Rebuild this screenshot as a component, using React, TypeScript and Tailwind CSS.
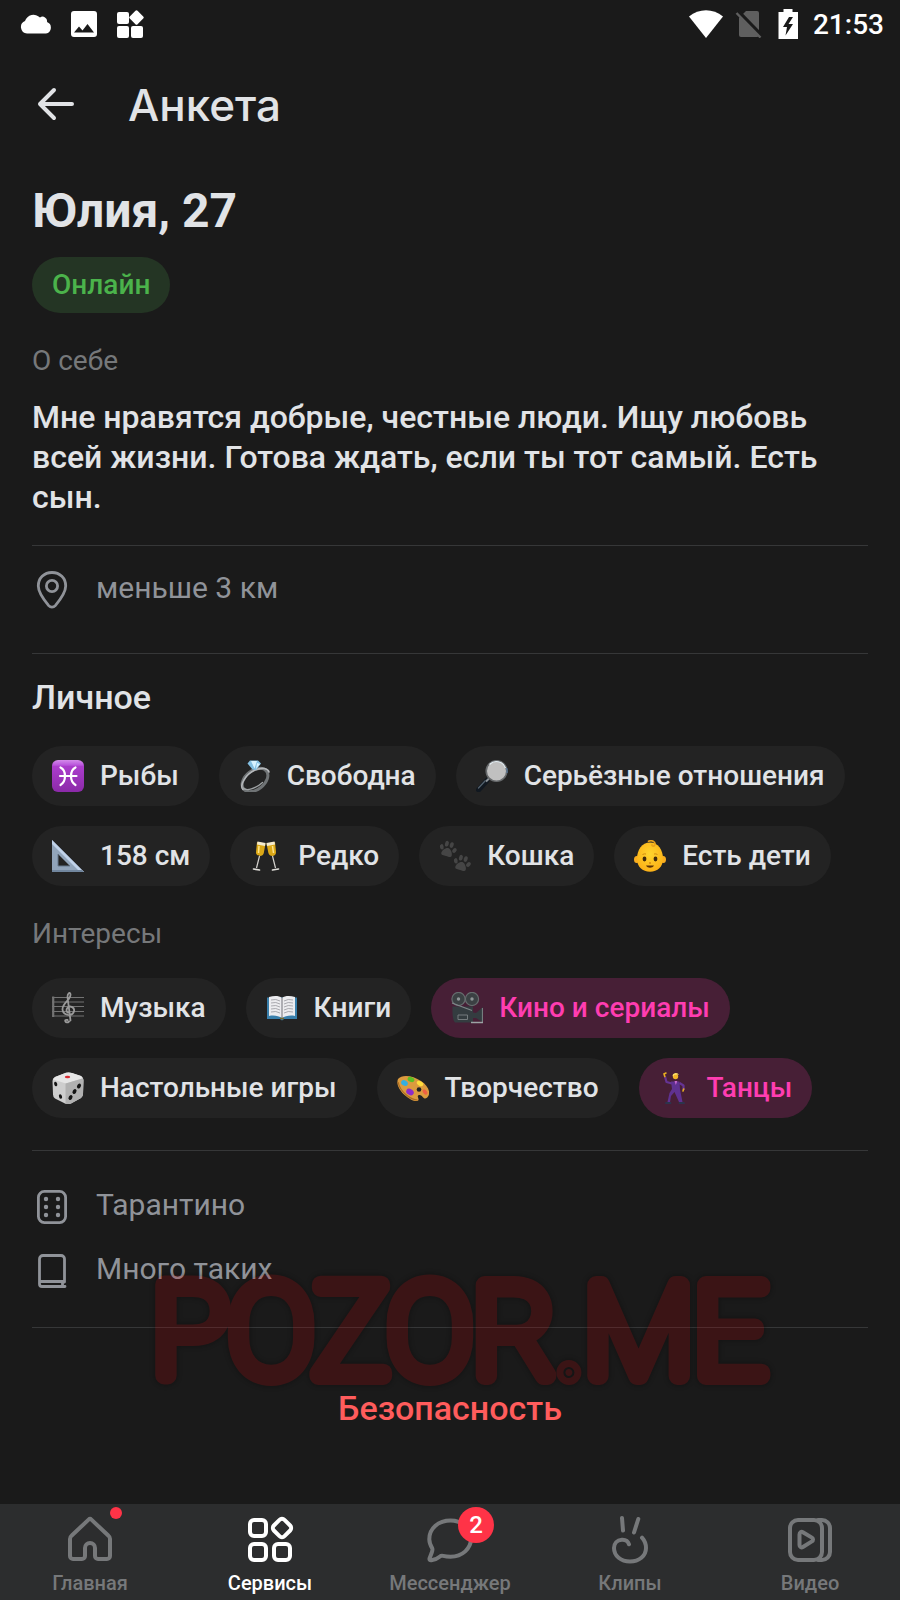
import React from 'react';

type Tag = { label: string; icon: React.ReactNode; accent?: boolean };
type Tab = { label: string; icon: React.ReactNode; active?: boolean; dot?: boolean; count?: number };

const Emoji = ({ children }: { children: React.ReactNode }) => (
  <svg viewBox="0 0 32 32" className="h-8 w-8 shrink-0" fill="none" aria-hidden="true">{children}</svg>
);

const Paw = ({ x, y, turn }: { x: number; y: number; turn: number }) => (
  <g transform={`translate(${x} ${y}) rotate(${turn})`} fill="#454545">
    <path d="M0 -1C2.6 -1 5.6 3 5.4 5.4C5.2 8 2.4 7.2 0 7.2S-5.2 8 -5.4 5.4C-5.6 3 -2.6 -1 0 -1Z" />
    <ellipse cx="-6.6" cy="-0.4" rx="1.9" ry="2.7" transform="rotate(-25 -6.6 -.4)" />
    <ellipse cx="-2.5" cy="-4.8" rx="1.9" ry="2.9" />
    <ellipse cx="2.5" cy="-4.8" rx="1.9" ry="2.9" />
    <ellipse cx="6.6" cy="-0.4" rx="1.9" ry="2.7" transform="rotate(25 6.6 -.4)" />
  </g>
);

const personal: Tag[] = [
  {
    label: 'Рыбы',
    icon: (
      <Emoji>
        <defs>
          <linearGradient id="pisces" x1="0" y1="0" x2="0" y2="1">
            <stop offset="0" stopColor="#d48bea" />
            <stop offset="0.16" stopColor="#b955dc" />
            <stop offset="0.2" stopColor="#ab3dcc" />
            <stop offset="1" stopColor="#8b2aa8" />
          </linearGradient>
        </defs>
        <rect width="32" height="32" rx="6" fill="url(#pisces)" />
        <path d="M8.500 7.500C14.500 10.500 14.500 21.500 8.500 25M23.500 7.500C17.500 10.500 17.500 21.500 23.500 25M8 16H24.500" stroke="#fff" strokeWidth="2.200" strokeLinecap="round" />
      </Emoji>
    ),
  },
  {
    label: 'Свободна',
    icon: (
      <Emoji>
        <ellipse cx="16" cy="20" rx="14.500" ry="9.500" transform="rotate(-38 16 20)" stroke="#6f7375" strokeWidth="3" />
        <path d="M4 29.500C0 25 7 14 16 10C23 7 29 8.500 30 12" stroke="#b4b7ba" strokeWidth="1.600" strokeLinecap="round" />
        <path d="M3.500 27.500C7 32 17 28.500 23.500 22.500" stroke="#9fa3a5" strokeWidth="1.300" strokeLinecap="round" />
        <path d="M8.500 3.500 11 .5h8L22 3.500l-5 6.500-3.500-.5Z" fill="#83bfe2" />
        <path d="M12 1h6l-2.500 7.500ZM18 3l3 1-4 5Z" fill="#d7f2ff" />
      </Emoji>
    ),
  },
  {
    label: 'Серьёзные отношения',
    icon: (
      <Emoji>
        <path d="M2.500 30 11 20.500" stroke="#111820" strokeWidth="5" strokeLinecap="round" />
        <path d="M2.500 28 9 21" stroke="#52606c" strokeWidth="1.300" strokeLinecap="round" />
        <path d="m10 21.500 3-3" stroke="#8b9297" strokeWidth="2" />
        <circle cx="20.500" cy="11" r="10.300" fill="#c0c0c0" stroke="#66696b" strokeWidth="1.600" />
        <path d="M13.500 4.500A9.600 9.600 0 0 1 29.500 8" stroke="#e3edf3" strokeWidth="1.200" />
        <path d="M30.700 8A11 11 0 0 1 31 13" stroke="#5b83ac" strokeWidth="1" />
      </Emoji>
    ),
  },
  {
    label: '158 см',
    icon: (
      <Emoji>
        <path fillRule="evenodd" d="M0 0 32 32H0ZM6 14v12h12Z" fill="#91a4ba" />
        <path d="M0 0 32 32H28L0 4Z" fill="#c0d2e9" />
        <path d="M0 30h30l2 2H0Z" fill="#71869e" />
        <path d="M6 14V26H18" stroke="#66788c" />
      </Emoji>
    ),
  },
  {
    label: 'Редко',
    icon: (
      <Emoji>
        <path d="M7 2 15.500 3.500 13.800 13C13 17.500 5.500 16.500 6 12Z" fill="#dba817" />
        <path d="M16.500 3.500 25 2 26 12C26.500 16.500 19.500 17.500 18.400 13Z" fill="#dba817" />
        <path d="M7.500 1.500 15.500 3 15 6 7 4.500ZM24.500 1.500 16.500 3 17 6 25 4.500Z" fill="#f4ebcf" />
        <path d="m9 6-.5 7M22.500 6l1 7" stroke="#ffe58a" strokeWidth="1.500" />
        <path d="M9.500 16 6.500 28M22.500 16 25.500 28" stroke="#d6d4cf" strokeWidth="1.200" />
        <path d="m3.500 29 6 1M22.500 30l6-1" stroke="#e0ded9" strokeWidth="1.600" strokeLinecap="round" />
      </Emoji>
    ),
  },
  {
    label: 'Кошка',
    icon: (
      <Emoji>
        <Paw x={9} y={9} turn={16} />
        <Paw x={23} y={23} turn={16} />
      </Emoji>
    ),
  },
  {
    label: 'Есть дети',
    icon: (
      <Emoji>
        <defs>
          <radialGradient id="face" cx="0.5" cy="0.4" r="0.65">
            <stop offset="0" stopColor="#ffd52e" />
            <stop offset="1" stopColor="#fbae16" />
          </radialGradient>
        </defs>
        <ellipse cx="2.800" cy="19.500" rx="2.800" ry="3.500" fill="#f9ad1f" />
        <ellipse cx="29.200" cy="19.500" rx="2.800" ry="3.500" fill="#f9ad1f" />
        <path d="M16 2.500C24 2.500 29 10 29 18.500S23.500 31.700 16 31.700 3 27 3 18.500 8 2.500 16 2.500Z" fill="url(#face)" />
        <path d="M14.500 1.200C18 -.2 21.500 1.500 21 4.500 20.500 6.800 17.500 6.500 18 4.800" stroke="#e9a31c" strokeWidth="1.600" strokeLinecap="round" />
        <ellipse cx="10.500" cy="19" rx="1.900" ry="2.400" fill="#422a0c" />
        <ellipse cx="21.500" cy="19" rx="1.900" ry="2.400" fill="#422a0c" />
        <path d="M8.500 14.500q2-1 3.500-.5M20 14q2-.5 3.500.5" stroke="#d08a10" />
        <path d="M12 25.500h8c-1.500 3-6.500 3-8 0Z" fill="#5a3106" />
        <path d="M15 23h2" stroke="#d98b12" strokeWidth="1.300" />
      </Emoji>
    ),
  },
];

const interests: Tag[] = [
  {
    label: 'Музыка',
    icon: (
      <Emoji>
        <path d="M0 5.500H32M0 10H32M0 14.500H32M0 19.500H32M0 24H32" stroke="#737373" strokeWidth="1.200" />
        <path d="M1.200 4.500v20.500" stroke="#737373" strokeWidth="2.200" />
        <path d="M17 29.500C14 32.500 11 27 15.500 28M18.500 28.500 15.500 5C15.500 1 18 -.5 18.500 2.500 19 8 10 11 10.500 17.500 11 23 19 25 21.500 20.500 24 15.500 17.500 12.500 15 16.500 13.500 19.500 16 21 17 20.500" stroke="#9a9a9a" strokeWidth="1.800" strokeLinecap="round" />
      </Emoji>
    ),
  },
  {
    label: 'Книги',
    icon: (
      <Emoji>
        <path d="M1 5.500H31V27H18l-2 1.500L14 27H1Z" fill="#397fab" />
        <path d="M3 24V5C8 3.500 13 3.500 16 6 19 3.500 24 3.500 29 5V24C24 23 19 24 16 26 13 24 8 23 3 24Z" fill="#ececef" />
        <path d="M16 6v20" stroke="#8e8e94" strokeWidth="1.300" />
        <path d="M5 8q5-1.500 9 1M5 11q5-1.500 9 1M5 14q5-1.500 9 1M5 17q5-1.500 9 1M5 20q5-1.500 9 1M18 9q4-2.500 9-1M18 12q4-2.500 9-1M18 15q4-2.500 9-1M18 18q4-2.500 9-1M18 21q4-2.500 9-1" stroke="#a9a9ae" strokeWidth="1" />
        <path d="M14 26.500h4" stroke="#75692c" strokeWidth="1.500" />
      </Emoji>
    ),
  },
  {
    label: 'Кино и сериалы',
    accent: true,
    icon: (
      <Emoji>
        <circle cx="7.500" cy="7" r="6.600" fill="#3b4043" stroke="#666c6e" strokeWidth="1.200" />
        <circle cx="21" cy="7" r="6.600" fill="#3b4043" stroke="#666c6e" strokeWidth="1.200" />
        <circle cx="7.500" cy="7" r="1.700" fill="#8f9597" />
        <circle cx="21" cy="7" r="1.700" fill="#8f9597" />
        <path d="M1.500 14.500h20.500v16H4Q1 28 1.500 14.500Z" fill="#343c40" />
        <path d="m22 20.500 3 .5 7-6v15.500l-7-4.500h-3Z" fill="#343c40" />
        <path d="M31.500 16v14" stroke="#757c7e" strokeWidth="1.200" />
        <path d="m1 11 20 7.500" stroke="#80878a" strokeWidth="1.200" />
        <path d="M7 27.500v-4.500h9.500v4.500Z" stroke="#747b7e" strokeWidth="1" />
        <path d="M20 30.500h12" stroke="#9da3a5" strokeWidth="1.500" />
      </Emoji>
    ),
  },
  {
    label: 'Настольные игры',
    icon: (
      <Emoji>
        <path d="M14 .8q3-.8 6 .2l9 3q2.500 1.500 2.500 4l-.5 14q0 2.500-2 4l-10 5.500q-3 1-6 0L3 26.500q-2-1.500-2-4L.5 9q0-3 2.500-4Z" fill="#cecece" />
        <path d="M3 5 14 .8q3-.8 6 .2l9 3q2 1 1 2.500L14 11.500 1.200 7.500Z" fill="#e6e6e6" />
        <path d="M13.500 11.500 30.500 6.500q1 .5 1 2L31 22q0 2.500-2 4l-10 5.500q-3 1-5.500.5Z" fill="#b1b1b1" />
        <ellipse cx="15.500" cy="5" rx="2.700" ry="1.300" fill="#d82b32" />
        <g fill="#151515">
          <ellipse cx="3.700" cy="12" rx="1.500" ry="2.400" transform="rotate(-18 3.700 12)" />
          <ellipse cx="8.500" cy="24.500" rx="1.500" ry="2.400" transform="rotate(-18 8.500 24.500)" />
          <ellipse cx="27" cy="14" rx="1.800" ry="2.600" transform="rotate(30 27 14)" />
          <ellipse cx="22.500" cy="19.500" rx="1.800" ry="2.600" transform="rotate(30 22.500 19.500)" />
          <ellipse cx="18.500" cy="25.500" rx="1.800" ry="2.600" transform="rotate(30 18.500 25.500)" />
        </g>
      </Emoji>
    ),
  },
  {
    label: 'Творчество',
    icon: (
      <Emoji>
        <path d="M1 7C5 2 16 3.500 24 9 31 13.500 34 20.500 31 24.500 27 30 25.500 22 22 23 18.500 24 24 28 20 29 14 30 -3 17 1 7Z" fill="#dc9b3e" />
        <path d="M1 10C3 20 14 28 20.500 28" stroke="#aa6c22" strokeWidth="1.200" />
        <circle cx="22" cy="17.500" r="2.300" fill="#232323" />
        <ellipse cx="7.500" cy="11" rx="3.500" ry="2.700" fill="#35afe0" transform="rotate(30 7.500 11)" />
        <ellipse cx="14" cy="7.500" rx="3.500" ry="2.400" fill="#5bbf25" transform="rotate(20 14 7.500)" />
        <ellipse cx="23" cy="11.500" rx="3.500" ry="2.200" fill="#ffdd3c" transform="rotate(30 23 11.500)" />
        <ellipse cx="13" cy="20" rx="4" ry="3" fill="#8d2bc9" transform="rotate(30 13 20)" />
        <ellipse cx="28" cy="20" rx="3" ry="1.800" fill="#ef6043" transform="rotate(50 28 20)" />
      </Emoji>
    ),
  },
  {
    label: 'Танцы',
    accent: true,
    icon: (
      <Emoji>
        <path d="M6 4.500 7.500 10 13 11.500M20.500 11 24.500 13.500 24.500 18" stroke="#653494" strokeWidth="2.200" strokeLinejoin="round" />
        <path d="M12 9.500h8.500l.5 8 2.500 12.500h-3.500l-4.500-10-3.500 4-1 6H8.500l2-9 2.500-4Z" fill="#5f3190" />
        <path d="m15.500 9 1.300 4L18.300 9" fill="#c565cf" />
        <circle cx="16.500" cy="4.500" r="2.700" fill="#f0b42a" />
        <path d="M13.700 4C13 .5 19.500-.3 19.700 3l-1.200-.5-3.500.5-.5 1.500Z" fill="#ffe269" />
        <path d="M5.800 4.500 5 2l2-1M24.700 17l-.7 2" stroke="#e8ae20" strokeWidth="1.600" strokeLinecap="round" />
        <path d="M7 31h4.500M20.500 31h4.500" stroke="#253c54" strokeWidth="1.700" strokeLinecap="round" />
      </Emoji>
    ),
  },
];

const NavIcon = ({ children }: { children: React.ReactNode }) => (
  <svg viewBox="0 0 48 48" className="h-12 w-12 overflow-visible" fill="none" stroke="currentColor" strokeWidth="4" strokeLinecap="round" strokeLinejoin="round" aria-hidden="true">
    {children}
  </svg>
);

const tabs: Tab[] = [
  {
    label: 'Главная',
    dot: true,
    icon: (
      <NavIcon>
        <path d="M22.600 4.600 5.500 20.800A4 4 0 0 0 4 24V41a3 3 0 0 0 3 3h9a3 3 0 0 0 3-3v-8a5 5 0 0 1 10 0v8a3 3 0 0 0 3 3h9a3 3 0 0 0 3-3V24a4 4 0 0 0-1.500-3.200L25.400 4.600a2 2 0 0 0-2.800 0Z" />
      </NavIcon>
    ),
  },
  {
    label: 'Сервисы',
    active: true,
    icon: (
      <NavIcon>
        <rect x="4" y="5" width="16" height="16" rx="4" />
        <rect x="4" y="29" width="16" height="16" rx="4" />
        <rect x="28" y="29" width="16" height="16" rx="4" />
        <rect x="28.500" y="5.500" width="15" height="15" rx="3.500" transform="rotate(45 36 13)" />
      </NavIcon>
    ),
  },
  {
    label: 'Мессенджер',
    count: 2,
    icon: (
      <NavIcon>
        <path d="M24.500 5.500C12.500 5.500 3.300 13 3.300 24.200c0 3.600 1.500 6.800 3 9.400.5 1 0 2.500-.6 4.200L3.600 43.200c-.5 1.500.3 2.200 1.800 2 3.800-.4 6.300-1.800 9-4 .9-.7 1.600-.6 2.800-.3 2 .5 4.600.8 7.300.8C36.500 41.700 45 33.500 45 23.600S36.500 5.500 24.500 5.500Z" />
      </NavIcon>
    ),
  },
  {
    label: 'Клипы',
    icon: (
      <NavIcon>
        <path d="m16 3 1 12.500M32.300 4 28 17.500M23 29.300C22 26 19 24.500 15.800 24.700 11 25 8 28.500 8 33 8 41 15 46.500 24 46.500S40 41 40 33C40 29 38.500 25.500 36 22.700" />
      </NavIcon>
    ),
  },
  {
    label: 'Видео',
    icon: (
      <NavIcon>
        <rect x="4" y="5" width="32" height="40" rx="8" />
        <path d="M32 5h4a8 8 0 0 1 8 8v24a8 8 0 0 1-8 8h-4" />
        <path d="M13.500 19.500v10.500c0 2 1.800 3 3.400 2l9-5.600c1.500-1 1.500-2.800 0-3.800l-9-5.400c-1.600-1-3.400 0-3.400 2.300z" />
      </NavIcon>
    ),
  },
];

const TagList = ({ items }: { items: Tag[] }) => (
  <ul className="flex flex-wrap gap-5">
    {items.map(item => (
      <li
        key={item.label}
        className={`flex h-[60px] items-center gap-4 rounded-full px-5 text-[28px] leading-8 font-medium whitespace-nowrap ${item.accent ? 'bg-[#471f36] text-[#ff3db1]' : 'bg-[#232323]'}`}
      >
        {item.icon}
        {item.label}
      </li>
    ))}
  </ul>
);

const InfoRow = ({ label, children }: { label: string; children: React.ReactNode }) => (
  <div className="flex h-16 items-center gap-6 text-[30px] leading-9 text-[#909399]">
    <svg viewBox="0 0 40 40" className="h-10 w-10 shrink-0" fill="none" stroke="currentColor" strokeWidth="2.800" strokeLinecap="round" strokeLinejoin="round" aria-hidden="true">
      {children}
    </svg>
    <span className="pb-1">{label}</span>
  </div>
);

const StatusBar = () => (
  <div className="flex h-12 items-center justify-between pr-4 pl-5 text-white">
    <div className="flex items-center gap-[18px]">
      <svg viewBox="0 0 32 28" className="h-7 w-8" fill="currentColor" aria-hidden="true">
        <path d="M7 23.500A6.500 6.500 0 0 1 5 11 9 9 0 0 1 20 7.500 4.500 4.500 0 0 1 27 12 6 6 0 0 1 26 23.500Z" />
      </svg>
      <svg viewBox="0 0 28 28" className="h-7 w-7" fill="currentColor" aria-hidden="true">
        <path fillRule="evenodd" d="M4 1H24a3 3 0 0 1 3 3V24a3 3 0 0 1-3 3H4a3 3 0 0 1-3-3V4A3 3 0 0 1 4 1ZM4 22.500H24L17.500 14l-5 6.500L9 16.500Z" />
      </svg>
      <svg viewBox="0 0 28 28" className="h-7 w-7" fill="currentColor" aria-hidden="true">
        <rect x="1" y="2" width="12" height="12" rx="2" />
        <rect x="1" y="16" width="12" height="12" rx="2" />
        <rect x="15" y="16" width="12" height="12" rx="2" />
        <rect x="15" y="2" width="11" height="11" rx="1.500" transform="rotate(45 20.500 7.500)" />
      </svg>
    </div>
    <div className="flex items-center gap-[11px]">
      <svg viewBox="0 0 36 28" className="h-7 w-9" fill="currentColor" aria-hidden="true">
        <path d="M18 28 1 6.500C11-2 25-2 35 6.500Z" />
      </svg>
      <svg viewBox="0 0 28 28" className="h-7 w-7" aria-hidden="true">
        <path d="M11 1H22a2 2 0 0 1 2 2V25a2 2 0 0 1-2 2H6a2 2 0 0 1-2-2V8Z" fill="#5f5f5f" />
        <path d="M3 1.500 27 26" stroke="#1a1a1a" strokeWidth="4" />
        <path d="M1.500 3 25.500 27.500" stroke="#5f5f5f" strokeWidth="2.400" />
      </svg>
      <svg viewBox="0 0 28 30" className="h-[30px] w-7" fill="currentColor" aria-hidden="true">
        <path fillRule="evenodd" d="M9.500 0h9v3H24v27H4.500V3h5ZM15 8 9 18h4l-1.500 8.500L19 15h-4.500l4.500-7Z" />
      </svg>
      <span className="pt-0.5 text-[28px] leading-8 font-medium">21:53</span>
    </div>
  </div>
);

const App: React.FC = () => (
  <div className="flex min-h-screen flex-col bg-[#1a1a1a] font-['Roboto',sans-serif] text-[#e1e3e6]">
    <StatusBar />
    <header className="flex h-28 items-center gap-12 px-8">
      <button aria-label="Назад" className="flex h-12 w-12 items-center justify-center">
        <svg viewBox="0 0 48 48" className="h-12 w-12" fill="none" stroke="currentColor" strokeWidth="4" strokeLinecap="round" strokeLinejoin="round" aria-hidden="true">
          <path d="M40 24H8M22 10 8 24l14 14" />
        </svg>
      </button>
      <h1 className="pt-0.5 font-['Inter',sans-serif] text-[44px] leading-[56px] font-medium">Анкета</h1>
    </header>

    <main className="flex-1 px-8 pt-[21px]">
      <h2 className="text-5xl leading-[60px] font-bold">Юлия, 27</h2>
      <div className="mt-4 inline-flex h-14 items-center rounded-full bg-[#243524] px-5 text-[28px] font-medium text-[#4bb34b]">Онлайн</div>
      <h3 className="mt-8 text-[28px] leading-8 text-[#76787a]">О себе</h3>
      <p className="mt-5 text-[32px] leading-10 font-medium">
        Мне нравятся добрые, честные люди. Ищу любовь всей жизни. Готова ждать, если ты тот самый. Есть сын.
      </p>

      <div className="mt-7 border-y border-[#363738] pt-3 pb-[31px]">
        <InfoRow label="меньше 3 км">
          <path d="M20 2.500C12 2.500 6.300 8.300 6.300 16c0 7 6.200 14.600 10.400 19.600 1.900 2.100 4.700 2.100 6.600 0C27.500 30.600 33.700 23 33.700 16 33.700 8.300 28 2.500 20 2.500Z" />
          <circle cx="20" cy="16" r="5.600" />
        </InfoRow>
      </div>

      <h3 className="mt-[23px] text-[34px] leading-10 font-medium">Личное</h3>
      <div className="mt-[29px]">
        <TagList items={personal} />
      </div>
      <h3 className="mt-8 mb-7 text-[28px] leading-8 text-[#76787a]">Интересы</h3>
      <TagList items={interests} />

      <div className="relative mt-8 border-y border-[#363738] py-6">
        <InfoRow label="Тарантино">
          <rect x="6.400" y="4.400" width="27.200" height="31.200" rx="6" />
          <path d="M14 12h.01M26 12h.01M14 20h.01M26 20h.01M14 28h.01M26 28h.01" strokeWidth="4.400" />
        </InfoRow>
        <InfoRow label="Много таких">
          <path d="M32.500 31V8a3.500 3.500 0 0 0-3.500-3.500H11A3.500 3.500 0 0 0 7.500 8v25a2.500 2.500 0 0 0 2.500 2.500h23M7.500 30.500h25M30.500 31v4" />
        </InfoRow>
        {/* watermark lies over the rows and the divider */}
        <svg
          viewBox="0 0 640 140"
          className="pointer-events-none absolute top-[108px] left-1/2 w-[640px] -translate-x-1/2 overflow-visible opacity-20 [filter:drop-shadow(0_0_2px_#000)_drop-shadow(0_0_2px_#000)]"
          aria-hidden="true"
        >
          <text x="329" y="117" fontFamily="Roboto" fontSize="128" fontWeight="100" textAnchor="middle" fill="#bf0006" stroke="#bf0006" strokeWidth="18" strokeLinejoin="round">POZOR.ME</text>
        </svg>
      </div>

      <button className="mt-[60px] mb-16 block w-full text-center text-[34px] leading-10 font-medium text-[#ff5c5c]">Безопасность</button>
    </main>

    <nav className="sticky bottom-0 grid h-24 grid-cols-5 bg-[#2c2d2e]">
      {tabs.map(tab => (
        <a
          key={tab.label}
          href="#"
          aria-current={tab.active ? 'page' : undefined}
          className={`flex flex-col items-center pt-[11px] text-xl leading-6 font-medium ${tab.active ? 'text-white' : 'text-[#76787a]'}`}
        >
          <span className="relative">
            {tab.icon}
            {tab.dot && <span className="absolute -top-2 -right-2 h-3 w-3 rounded-full bg-[#ff3347]" />}
            {tab.count !== undefined && (
              <span className="absolute -top-2 -right-5 flex h-9 w-9 items-center justify-center rounded-full bg-[#ff3347] text-2xl text-white">{tab.count}</span>
            )}
          </span>
          <span className="mt-2">{tab.label}</span>
        </a>
      ))}
    </nav>
  </div>
);

export default App;
